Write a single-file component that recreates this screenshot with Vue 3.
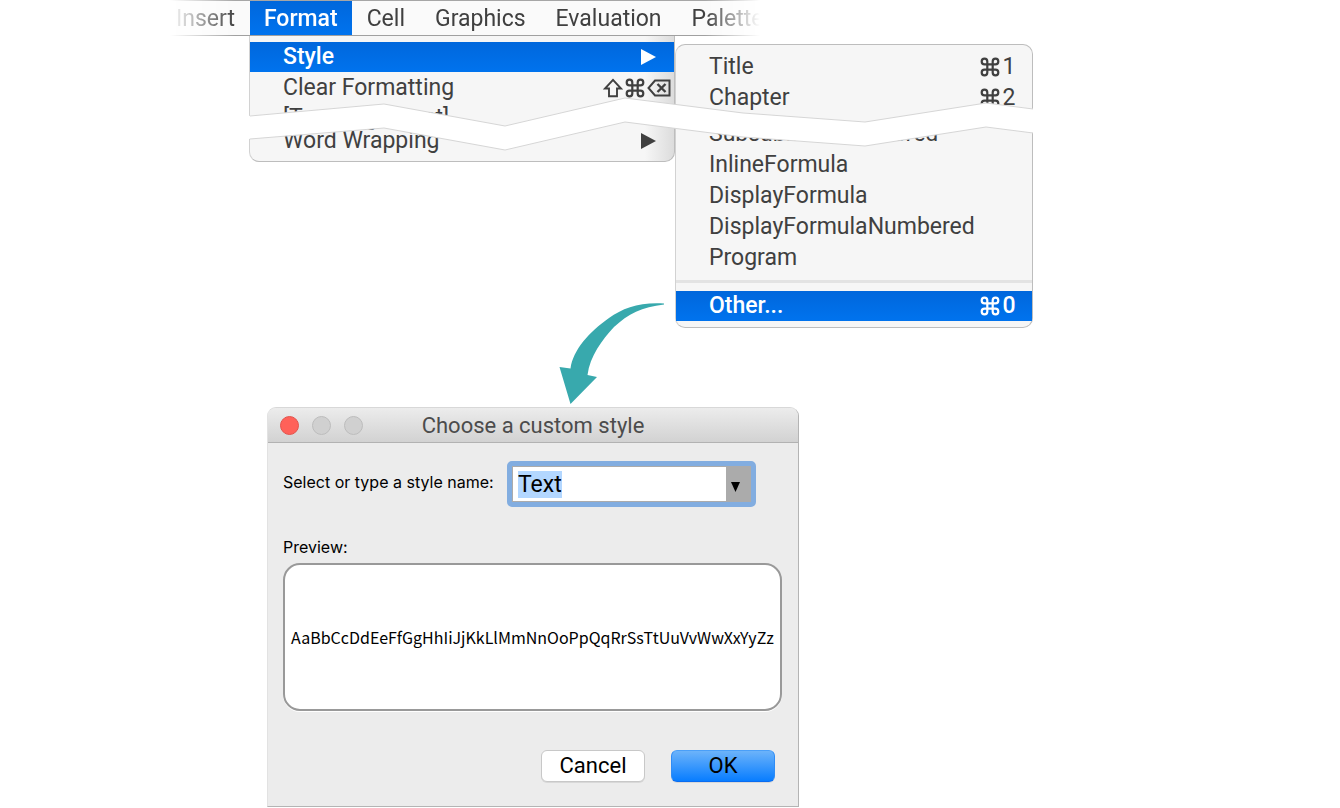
<script setup>
import { onMounted, ref } from 'vue'

const menubar = ['Insert', 'Format', 'Cell', 'Graphics', 'Evaluation', 'Palettes']
const styleName = ref('Text')
const nameField = ref(null)

const topStyles = [
  { label: 'Title', key: '1' },
  { label: 'Chapter', key: '2' },
]
const lowerStyles = ['InlineFormula', 'DisplayFormula', 'DisplayFormulaNumbered', 'Program']

onMounted(() => {
  nameField.value.focus()
  nameField.value.select()
})
</script>

<template>
  <main class="figure">
    <svg class="defs" width="0" height="0" aria-hidden="true">
      <symbol id="cmd" viewBox="0 0 20 20">
        <path
          d="M7.300 7.300H4.500a2.800 2.800 0 1 1 2.800-2.800V15.500a2.800 2.800 0 1 1-2.800-2.800H15.500a2.800 2.800 0 1 1-2.800 2.800V4.500a2.800 2.800 0 1 1 2.800 2.800Z"
          fill="none" stroke="currentColor" stroke-width="2.200" />
      </symbol>
      <symbol id="shift" viewBox="0 0 20 20">
        <path d="M10 1.800 18 10.500H14V18.200H6V10.500H2Z" fill="none" stroke="currentColor" stroke-width="1.900" />
      </symbol>
      <symbol id="erase" viewBox="0 0 24 20">
        <path d="M8 2.500H22.500V17.500H8L1.500 10Z" fill="none" stroke="currentColor" stroke-width="2" />
        <path d="M10.500 6 18.500 14M18.500 6 10.500 14" fill="none" stroke="currentColor" stroke-width="2.400" />
      </symbol>
    </svg>

    <nav class="menubar" aria-label="Application menu">
      <button v-for="item in menubar" :key="item" type="button" :class="{ active: item === 'Format' }">{{ item }}</button>
    </nav>

    <section class="menus">
      <div class="menu format" role="menu" aria-label="Format">
        <button type="button" role="menuitem" class="row active arrow-row">
          <span>Style</span>
          <svg class="tri" viewBox="0 0 15 16"><path d="M0 0 15 8 0 16Z" fill="currentColor" /></svg>
        </button>
        <button type="button" role="menuitem" class="row erase-row">
          <span>Clear Formatting</span>
          <span class="keys">
            <svg class="ico"><use href="#shift" /></svg>
            <svg class="ico"><use href="#cmd" /></svg>
            <svg class="ico wide"><use href="#erase" /></svg>
          </span>
        </button>
        <button type="button" role="menuitem" class="row cut"><span>[Text Alignment]</span></button>
        <button type="button" role="menuitem" class="row arrow-row">
          <span>Word Wrapping</span>
          <svg class="tri" viewBox="0 0 15 16"><path d="M0 0 15 8 0 16Z" fill="currentColor" /></svg>
        </button>
      </div>

      <div class="menu styles" role="menu" aria-label="Style">
        <button v-for="s in topStyles" :key="s.key" type="button" role="menuitem" class="row">
          <span>{{ s.label }}</span>
          <span class="keys"><svg class="ico"><use href="#cmd" /></svg><span class="digit">{{ s.key }}</span></span>
        </button>
        <button type="button" role="menuitem" class="row after-tear"><span>SubsubitemNumbered</span></button>
        <button v-for="s in lowerStyles" :key="s" type="button" role="menuitem" class="row"><span>{{ s }}</span></button>
        <hr />
        <button type="button" role="menuitem" class="row active">
          <span>Other...</span>
          <span class="keys"><svg class="ico"><use href="#cmd" /></svg><span class="digit">0</span></span>
        </button>
      </div>

      <svg class="tear" viewBox="0 0 786 60" aria-hidden="true">
        <path
          d="M0 20 136 8 257 30 377 2 495 17 617 26 738 7 786 13V37L738 31 617 50 495 41 377 26 257 54 136 32 0 43Z"
          fill="#fff" />
        <path
          d="M2 20 136 8 257 30 377 2 495 17 617 26 738 7 785 13M2 43 136 32 257 54 377 26 495 41 617 50 738 31 785 37"
          fill="none" stroke="#d6d6d6" />
      </svg>
      <svg class="arrow" viewBox="0 0 106 102" aria-hidden="true">
        <path
          d="M105 1.500C81 0 64 6 50 16 30 30 14 48 11.500 66.500L.5 65 11.500 102 38 75 28.500 73C31 54 43 38 55 25 69 12 83 5 105 2.500Z"
          fill="#38a9ad" />
      </svg>
    </section>

    <form class="dialog" aria-labelledby="dlg-title" @submit.prevent>
      <header class="titlebar">
        <div class="lights">
          <button type="button" class="close" aria-label="Close"></button>
          <button type="button" aria-label="Minimize" disabled></button>
          <button type="button" aria-label="Zoom" disabled></button>
        </div>
        <h1 id="dlg-title">Choose a custom style</h1>
      </header>
      <div class="body">
        <div class="field">
          <label for="style-name">Select or type a style name:</label>
          <div class="combo">
            <input id="style-name" ref="nameField" v-model="styleName" type="text" autocomplete="off" spellcheck="false" />
            <button type="button" aria-label="Show styles">
              <svg viewBox="0 0 10 11"><path d="M0 0H10L5 11Z" fill="#000" /></svg>
            </button>
          </div>
        </div>
        <p class="caption">Preview:</p>
        <div class="preview">AaBbCcDdEeFfGgHhIiJjKkLlMmNnOoPpQqRrSsTtUuVvWwXxYyZz</div>
        <div class="actions">
          <button type="button">Cancel</button>
          <button type="submit" class="primary">OK</button>
        </div>
      </div>
    </form>
  </main>
</template>

<style>
body {
  margin: 0;
  background: #fff;
}
</style>

<style scoped>
.figure {
  box-sizing: border-box;
  min-height: 100vh;
  padding: 0 160px 1px;
  font-family: Roboto, "Liberation Sans", sans-serif;
  font-size: 23px;
  color: #404040;
}
button {
  margin: 0;
  padding: 0;
  border: 0;
  background: none;
  font: inherit;
  color: inherit;
}
.defs {
  position: absolute;
}
.menubar {
  box-sizing: border-box;
  display: flex;
  max-width: 602px;
  height: 36px;
  padding-left: 1px;
  border-top: 1px solid #a6a6a6;
  border-bottom: 1px solid #a0a0a0;
  background: #fafafa;
  overflow: hidden;
  -webkit-mask-image: linear-gradient(90deg, transparent 10px, #000 75px, #000 545px, transparent 600px);
  mask-image: linear-gradient(90deg, transparent 10px, #000 75px, #000 545px, transparent 600px);
}
.menubar button {
  flex: none;
  padding: 0 15px;
  line-height: 36px;
}
.menubar .active {
  padding: 0 14px;
  color: #fff;
  font-weight: 500;
  background: linear-gradient(#0067dc, #0073ee);
}
.menus {
  position: relative;
  display: flex;
  align-items: flex-start;
  padding-left: 89px;
}
.menu {
  box-sizing: border-box;
  display: flex;
  flex-direction: column;
  background: #f6f6f6;
  border: 1px solid #bdbdbd;
}
.format {
  flex: 0 1 426px;
  padding: 6px 0 5px;
  border-top: 0;
  border-left-color: #d2d2d2;
  border-radius: 0 0 10px 10px;
  background: linear-gradient(90deg, #f6f6f6 395px, #dcdcdc);
}
.styles {
  flex: 0 1 358px;
  margin-top: 8px;
  padding: 7px 0 6px;
  border-left-color: #d2d2d2;
  border-radius: 10px;
}
.row {
  display: flex;
  align-items: center;
  justify-content: space-between;
  height: 30px;
  padding: 0 16px 0 33px;
  line-height: 30px;
  text-align: left;
  white-space: nowrap;
}
.styles .row + .row {
  margin-top: 1px;
}
.row.arrow-row {
  padding-right: 18px;
}
.row.erase-row {
  margin-top: 1px;
  padding-right: 3px;
}
.row.cut {
  align-items: flex-start;
  height: 23px;
}
.styles .row.after-tear {
  margin-top: 6px;
}
.row.active {
  color: #fff;
  font-weight: 500;
  background: linear-gradient(#0067dc, #0073ee);
}
.tri {
  width: 15px;
  height: 16px;
}
.keys {
  display: flex;
  align-items: center;
  gap: 2px;
}
.ico {
  width: 20px;
  height: 20px;
}
.ico.wide {
  width: 24px;
}
.digit {
  width: 14px;
  text-align: center;
}
hr {
  align-self: stretch;
  height: 3px;
  margin: 7px 0 8px;
  border: 0;
  background: #e3e3e3;
}
.tear {
  position: absolute;
  top: 60px;
  left: 88px;
  width: 786px;
  height: 60px;
}
.arrow {
  position: absolute;
  top: 266px;
  left: 399px;
  width: 106px;
  height: 102px;
}
.dialog {
  box-sizing: border-box;
  max-width: 532px;
  margin: 79px 0 0 107px;
  border: 1px solid #b4b4b4;
  border-top-color: #d8d8d8;
  border-left-color: #e2e2e2;
  border-radius: 9px 9px 0 0;
  background: #ececec;
  color: #000;
  overflow: hidden;
}
.titlebar {
  display: grid;
  grid-template-columns: 1fr auto 1fr;
  align-items: center;
  height: 34px;
  border-bottom: 1px solid #b2b2b2;
  background: linear-gradient(#ececec, #d2d2d2);
}
.lights {
  display: flex;
  gap: 13px;
  padding-left: 12px;
}
.lights button {
  box-sizing: border-box;
  width: 19px;
  height: 19px;
  border: 1px solid #bcbcbc;
  border-radius: 50%;
  background: #d0d0d0;
}
.lights .close {
  border-color: #e2534c;
  background: #ff6159;
}
h1 {
  margin: 0;
  padding-top: 2px;
  font-size: 22px;
  font-weight: 400;
  line-height: 32px;
  color: #4c4c4c;
}
.body {
  padding: 18px 16px 24px 15px;
}
.field {
  display: flex;
  align-items: center;
  gap: 10px;
}
label,
.caption {
  font-family: Inter, Roboto, sans-serif;
  font-size: 16px;
  line-height: 20px;
}
.field label {
  flex: 0 0 214px;
  padding-bottom: 4px;
  white-space: nowrap;
}
.combo {
  box-sizing: border-box;
  display: flex;
  flex: 0 1 249px;
  min-width: 0;
  height: 46px;
  border: 5px solid #82ade0;
  border-radius: 5px;
  background: #ababab;
}
.combo input {
  box-sizing: border-box;
  flex: 1;
  min-width: 0;
  margin: 1px 0 1px 1px;
  padding: 0 5px;
  border: 0;
  outline: 0;
  border-radius: 0;
  background: #fff;
  font: inherit;
  color: #000;
}
.combo input::selection {
  background: #b3d7ff;
  color: #000;
}
.combo button {
  width: 25px;
  padding-right: 6px;
}
.combo svg {
  width: 9px;
  height: 10px;
}
.caption {
  margin: 30px 0 6px;
}
.preview {
  box-sizing: border-box;
  display: flex;
  align-items: center;
  justify-content: center;
  height: 148px;
  border: 2px solid #999;
  border-radius: 17px;
  background: #fff;
  box-shadow: 0 1px 0 #fff;
  font-family: "Noto Sans CJK SC", sans-serif;
  font-size: 16px;
  white-space: nowrap;
}
.actions {
  display: flex;
  justify-content: flex-end;
  gap: 26px;
  margin-top: 39px;
  padding-right: 7px;
}
.actions button {
  box-sizing: border-box;
  width: 104px;
  height: 32px;
  border: 1px solid #c8c8c8;
  border-radius: 6px;
  background: #fff;
  box-shadow: 0 1px 0 #d8d8d8;
  font-size: 22px;
  line-height: 30px;
}
.actions .primary {
  border-color: #4a9ff8 #2f8cf5 #0a6cf0;
  background: linear-gradient(#6cb3fa, #087dff);
}
</style>
